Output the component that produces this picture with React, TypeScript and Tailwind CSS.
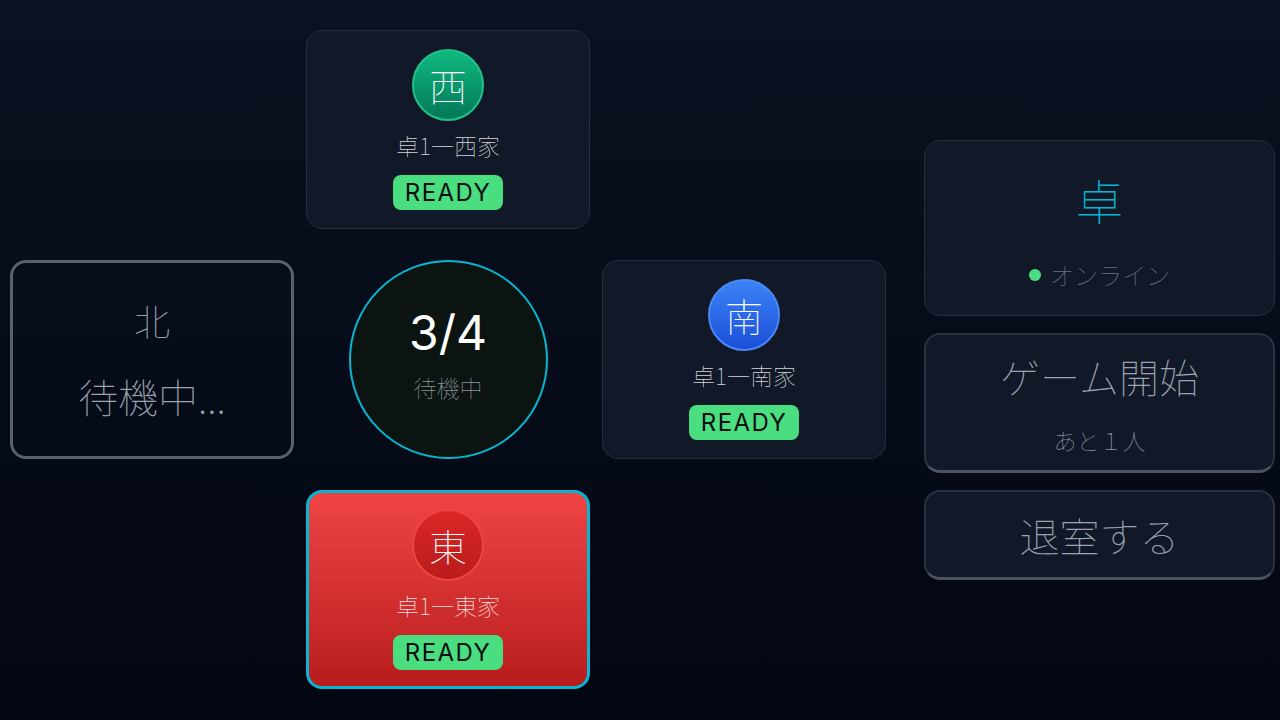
import React from "react";

const cjk = "font-['Noto_Sans_CJK_JP_Thin','Noto_Sans_CJK_JP',sans-serif] font-thin";
const latin = "font-['Inter','Noto_Sans_CJK_JP',sans-serif]";

type Seat = {
  wind: string;
  name: string;
  avatar: string;
  ring: string;
};

const ReadyBadge: React.FC = () => (
  <div
    className={`${latin} flex h-[35px] w-[110px] items-center justify-center rounded-lg bg-[#4ade80] text-[24px] font-normal leading-none tracking-[0.06em] text-[#0b0f14]`}
  >
    READY
  </div>
);

const SeatCard: React.FC<{ seat: Seat; self?: boolean }> = ({ seat, self }) => (
  <div
    className={`flex h-[199px] flex-col items-center justify-center gap-[11px] rounded-2xl ${
      self
        ? "border-[3px] border-[#06b6d4] bg-gradient-to-b from-[#ef4444] to-[#b91c1c]"
        : "border border-[#262e3c] bg-[#111827]"
    }`}
  >
    <div
      className={`flex h-[72px] w-[72px] items-center justify-center rounded-full border-2 bg-gradient-to-b ${seat.avatar} ${seat.ring}`}
    >
      <span className={`${cjk} text-[38px] leading-none text-white`}>{seat.wind}</span>
    </div>
    <div
      className={`${cjk} -translate-y-[3px] text-[23px] leading-8 ${self ? "text-[#fde2e2]" : "text-[#d1d5db]"}`}
    >
      {seat.name}
    </div>
    <ReadyBadge />
  </div>
);

const west: Seat = {
  wind: "西",
  name: "卓1一西家",
  avatar: "from-[#10b981] to-[#047857]",
  ring: "border-[#22c08a]",
};
const south: Seat = {
  wind: "南",
  name: "卓1一南家",
  avatar: "from-[#3b82f6] to-[#1d4ed8]",
  ring: "border-[#4a8af4]",
};
const east: Seat = {
  wind: "東",
  name: "卓1一東家",
  avatar: "from-[#dc2626] to-[#b91c1c]",
  ring: "border-[#ef4444]",
};

export default function App() {
  return (
    <div className="flex h-[720px] w-[1280px] items-start bg-gradient-to-b from-[#0b1120] to-[#030712]">
      {/* table: 3x3 seats */}
      <div className="ml-[10px] mt-[30px] grid grid-cols-[284px_284px_284px] gap-x-3 gap-y-[31px]">
        <div />
        <SeatCard seat={west} />
        <div />

        {/* empty north seat */}
        <div className="flex h-[199px] flex-col items-center justify-center rounded-2xl border-[3px] border-[#5b606b]">
          <div className={`${cjk} mt-0 text-[36px] leading-10 text-[#9ca3af]`}>北</div>
          <div className={`${cjk} mt-[32px] text-[40px] leading-[48px] text-[#9ca3af]`}>待機中...</div>
        </div>

        <div className="flex items-center justify-center">
          <div className="flex h-[199px] w-[199px] flex-col items-center justify-center rounded-full border-2 border-[#06b6d4] bg-[#0b1411]">
            <div className={`${latin} mt-[-12px] text-[48px] font-normal leading-none text-white`}>3/4</div>
            <div className={`${cjk} mt-[19px] text-[23px] leading-none text-[#8b919c]`}>待機中</div>
          </div>
        </div>

        <SeatCard seat={south} />

        <div />
        <SeatCard seat={east} self />
        <div />
      </div>

      {/* side panel */}
      <div className="ml-[38px] flex h-[720px] w-[351px] flex-col justify-center gap-[17px]">
        <div className="flex h-[176px] flex-col items-center rounded-2xl border border-[#262e3c] bg-[#111827] pt-[34px]">
          <div className={`${cjk} text-[48px] leading-[48px] text-[#06b6d4]`}>卓</div>
          <div className="mt-[36px] flex items-center gap-[9px]">
            <span className="h-3 w-3 rounded-full bg-[#4ade80]" />
            <span className={`${cjk} text-[24px] leading-8 text-[#6b7280]`}>オンライン</span>
          </div>
        </div>

        <button className="flex h-[140px] flex-col items-center rounded-2xl border-2 border-[#2a3241] border-b-[3px] border-b-[#4b5260] bg-[#111827] pt-[17px]">
          <span className={`${cjk} text-[40px] leading-[48px] text-[#9ca3af]`}>ゲーム開始</span>
          <span className={`${cjk} mt-[24px] text-[23px] leading-8 text-[#8b919c]`}>あと１人</span>
        </button>

        <button className="flex h-[90px] items-center justify-center rounded-2xl border-2 border-[#2a3241] border-b-[3px] border-b-[#4b5260] bg-[#111827]">
          <span className={`${cjk} text-[40px] leading-[48px] text-[#9ca3af]`}>退室する</span>
        </button>
      </div>
    </div>
  );
}
